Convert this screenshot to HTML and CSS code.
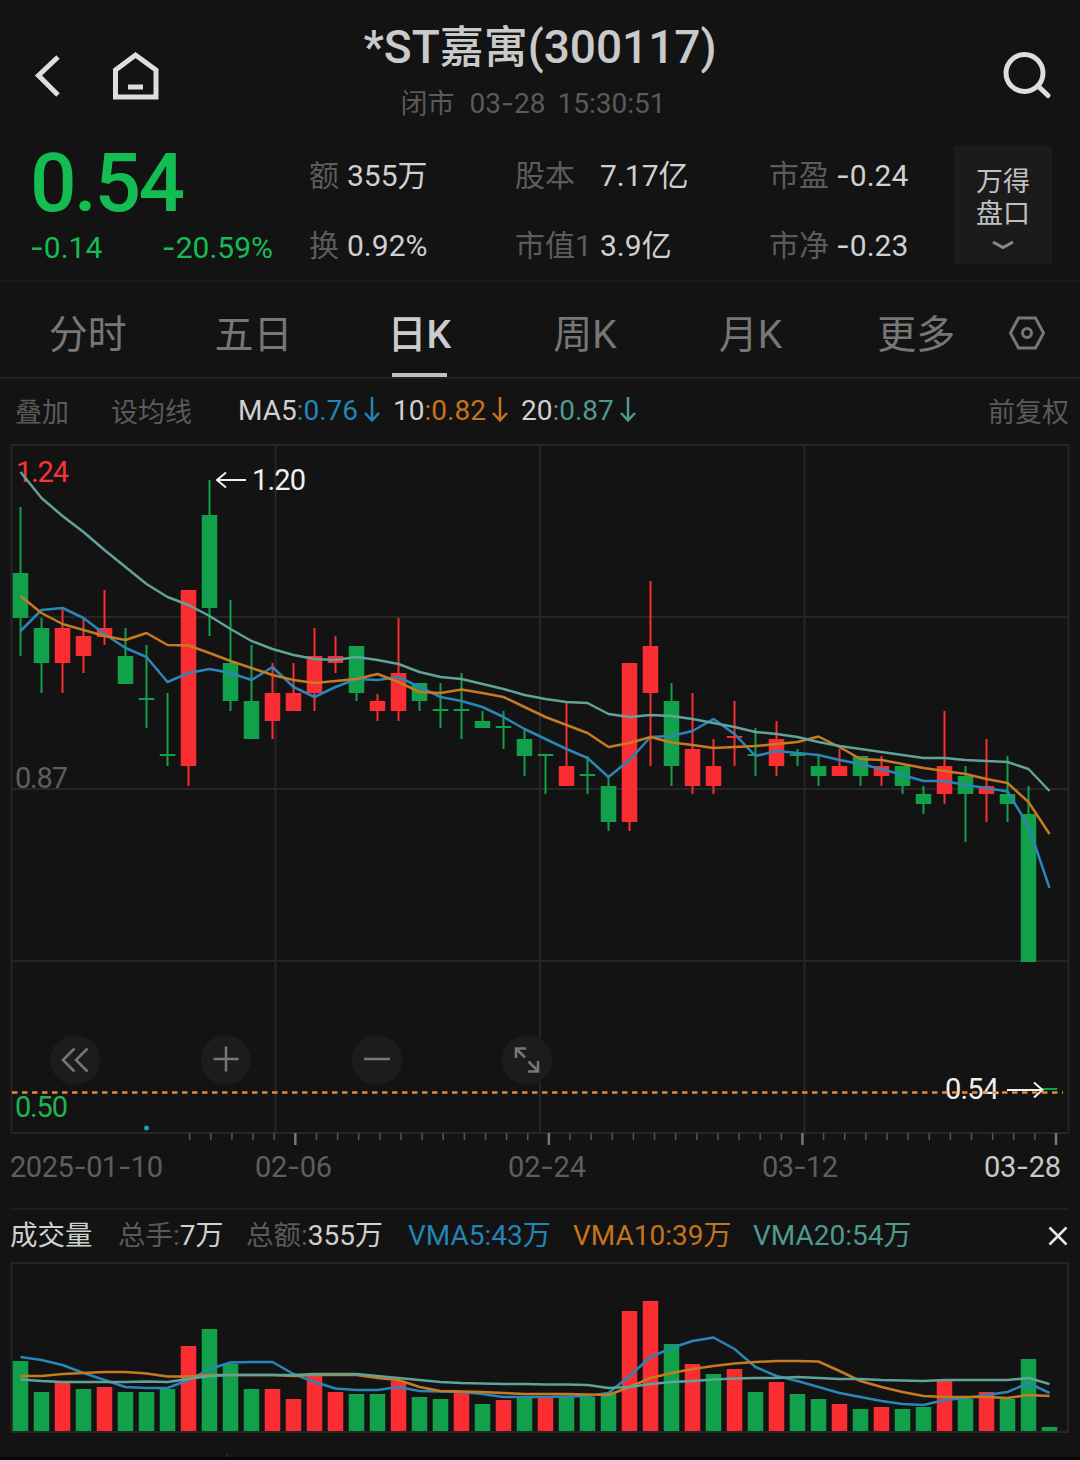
FILE: index.html
```html
<!DOCTYPE html>
<html lang="zh-CN">
<head>
    <meta charset="UTF-8">
    <meta name="viewport" content="width=device-width, initial-scale=1.0">
    <title>*ST嘉寓(300117)</title>
    <link rel="stylesheet" href="styles.css">
</head>
<body>
    <header class="top-bar">
        <div class="top-left">
            <svg class="icon-back" width="30" height="48" viewBox="0 0 30 48"><path d="M27 7L7.500 25.500L27 45"/></svg>
            <svg class="icon-home" width="50" height="52" viewBox="0 0 50 52"><path d="M5.500 20L25.500 5L46 20V47H5.500Z"/><path d="M18 37H33"/></svg>
        </div>
        <div class="top-title">
            <h1>*ST<span class="cn">嘉寓</span>(300117)</h1>
            <p><span class="status">闭市</span><span>03<i>-</i>28</span><span class="time">15:30:51</span></p>
        </div>
        <svg class="icon-search" width="50" height="50" viewBox="0 0 50 50"><circle cx="22.5" cy="23" r="18.5"/><path d="M36 36L46 45.5"/></svg>
    </header>

    <section class="quote">
        <div class="price down">
            <div class="price-now">0.54</div>
            <div class="price-change"><span><i>-</i>0.14</span><span><i>-</i>20.59%</span></div>
        </div>
        <dl class="stats stats-a">
            <div><dt>额</dt><dd>355万</dd></div>
            <div><dt>换</dt><dd>0.92%</dd></div>
        </dl>
        <dl class="stats stats-b">
            <div><dt>股本</dt><dd>7.17亿</dd></div>
            <div><dt>市值1</dt><dd>3.9亿</dd></div>
        </dl>
        <dl class="stats stats-c">
            <div><dt>市盈</dt><dd><i>-</i>0.24</dd></div>
            <div><dt>市净</dt><dd><i>-</i>0.23</dd></div>
        </dl>
        <button class="more-quote">
            万得<br>盘口
            <svg width="22" height="10" viewBox="0 0 22 10"><path d="M1 2L11 7.5L21 2"/></svg>
        </button>
    </section>

    <nav class="tabs">
        <a>分时</a>
        <a>五日</a>
        <a class="active">日K</a>
        <a>周K</a>
        <a>月K</a>
        <a>更多</a>
        <svg class="icon-settings" width="38" height="36" viewBox="0 0 38 36"><path d="M10.5 3H27.5L35.5 18L27.5 33H10.5L2.500 18Z"/><circle cx="19" cy="18" r="4.500"/></svg>
    </nav>

    <div class="ma-bar">
        <span class="tool">叠加</span>
        <span class="tool tool-ma">设均线</span>
        <span class="ma">MA5<b class="blue">:0.76</b><svg class="blue" width="18" height="28" viewBox="0 0 18 28"><path d="M9 1V24M2 17L9 24.500L16 17"/></svg></span>
        <span class="ma">10<b class="orange">:0.82</b><svg class="orange" width="18" height="28" viewBox="0 0 18 28"><path d="M9 1V24M2 17L9 24.500L16 17"/></svg></span>
        <span class="ma">20<b class="teal">:0.87</b><svg class="teal" width="18" height="28" viewBox="0 0 18 28"><path d="M9 1V24M2 17L9 24.500L16 17"/></svg></span>
        <span class="tool adjust">前复权</span>
    </div>

    <svg class="chart" id="kline" width="1080" height="764" viewBox="0 444 1080 764">
        <g class="grid">
            <rect x="11.500" y="445" width="1057" height="688"/>
            <path d="M275.500 445V1133M540 445V1133M804.500 445V1133M11 617H1068M11 789H1068M11 961H1068"/>
        </g>
        <g id="ticks" class="ticks"></g>
        <text x="16" y="482" class="red" textLength="53">1.24</text>
        <text x="15" y="788" class="axis" textLength="53">0.87</text>
        <text x="15" y="1117" class="green" textLength="53">0.50</text>

        <g id="candles"></g>
        <g id="ma-lines" class="lines"></g>
        <circle cx="146.500" cy="1128" r="2.500" fill="#1a9fb5"/>

        <g class="mark">
            <path d="M217 480H246M226 472.500L217 480L226 487.500"/>
            <text x="252" y="490" textLength="54">1.20</text>
            <text x="945" y="1099" textLength="54">0.54</text>
            <path d="M1007 1090H1042M1034 1082.500L1042.500 1090L1034 1097.500"/>
        </g>
        <path class="now-line" d="M12 1092.500H1063"/>

        <g class="round-btn">
            <circle cx="75" cy="1060" r="25"/>
            <path d="M74.500 1048.500L63 1060L74.500 1071.500M87.500 1048.500L76 1060L87.500 1071.500"/>
            <circle cx="226" cy="1060" r="25"/>
            <path d="M213.500 1059H238.500M226 1046.500V1071.500"/>
            <circle cx="377" cy="1060" r="25"/>
            <path d="M364 1059H390"/>
            <circle cx="527" cy="1060" r="25"/>
            <path d="M516 1058V1048.500H526M516 1048.500L525 1057.500M528.500 1061.500L538 1071M538 1061V1071.500H528"/>
        </g>

        <g class="dates">
            <text x="10" y="1177" textLength="153">2025<tspan class="dash">-</tspan>01<tspan class="dash">-</tspan>10</text>
            <text x="255" y="1177" textLength="77">02<tspan class="dash">-</tspan>06</text>
            <text x="508" y="1177" textLength="78">02<tspan class="dash">-</tspan>24</text>
            <text x="762" y="1177" textLength="76">03<tspan class="dash">-</tspan>12</text>
            <text x="984" y="1177" textLength="77" class="today">03<tspan class="dash">-</tspan>28</text>
        </g>
    </svg>

    <div class="vol-bar">
        <span class="vol-name">成交量</span>
        <span class="vol-hands"><em>总手:</em>7万</span>
        <span class="vol-amount"><em>总额:</em>355万</span>
        <span class="vma blue">VMA5:43万</span>
        <span class="vma orange">VMA10:39万</span>
        <span class="vma teal">VMA20:54万</span>
        <svg class="icon-close" width="20" height="20" viewBox="0 0 20 20"><path d="M1.500 1.500L18.500 18.500M18.500 1.500L1.500 18.500"/></svg>
    </div>

    <svg class="chart" id="volume" width="1080" height="198" viewBox="0 1262 1080 198">
        <g class="grid">
            <rect x="11.500" y="1263" width="1056.500" height="169"/>
            <path d="M227 1454V1458"/>
        </g>
        <path d="M0 1458.500H1080" stroke="#050505" stroke-width="3"/>
        <g id="vol-bars"></g>
        <g id="vma-lines" class="lines"></g>
    </svg>

    <script src="script.js"></script>
</body>
</html>
```

FILE: styles.css
```css
* {
    box-sizing: border-box;
}

body {
    margin: 0;
    width: 1080px;
    height: 1460px;
    overflow: hidden;
    background: #131313;
    color: #d0d0d0;
    font-family: Roboto, "Noto Sans CJK SC", sans-serif;
    font-size: 30px;
}

h1, p, dl, dd {
    margin: 0;
}

svg {
    display: block;
    fill: none;
    flex-shrink: 0;
}

/* wide minus sign */
i, .dash {
    font-family: Inter, sans-serif;
    font-style: normal;
    line-height: 1;
}

.blue { color: #2484b8; }
.orange { color: #c4741c; }
.teal { color: #4f9a90; }

/* Header */
.top-bar {
    display: flex;
    justify-content: space-between;
    height: 140px;
    padding: 0 28px 0 31px;
}

.top-left {
    display: flex;
    gap: 49px;
    width: 200px;
    padding-top: 50px;
}

.icon-back, .icon-home, .icon-search {
    stroke: #dedede;
    stroke-width: 5;
}

.icon-search {
    margin-top: 50px;
    stroke-linecap: round;
}

.top-title {
    width: 400px;
    margin-left: 109px;
    margin-right: auto;
    padding-top: 17px;
    text-align: center;
}

.top-title h1 {
    font-size: 46px;
    line-height: 60px;
    font-weight: 500;
    white-space: nowrap;
    color: #cacaca;
}

.top-title .cn {
    font-size: 44px;
}

.top-title p {
    display: flex;
    justify-content: center;
    gap: 15px;
    margin-left: -14px;
    font-size: 28px;
    line-height: 52px;
    color: #5a5a5a;
}

.status {
    font-size: 27px;
}

.time {
    margin-left: -3px;
}

/* Quote */
.quote {
    display: flex;
    height: 142px;
    border-bottom: 2px solid #1b1b1b;
    padding-left: 30px;
}

.price {
    width: 279px;
}

.down {
    color: #13bd52;
}

.price-now {
    font-size: 82px;
    font-weight: 500;
    line-height: 86px;
    letter-spacing: -2.5px;
}

.price-change {
    display: flex;
    justify-content: space-between;
    width: 243px;
    font-size: 30px;
    line-height: 44px;
}

.stats {
    padding-top: 1px;
}

.stats > div {
    display: flex;
    height: 70px;
    line-height: 70px;
}

.stats dt {
    color: #5c5c5c;
}

.stats dd {
    font-size: 30px;
    white-space: nowrap;
}

.stats-a { width: 206px; }
.stats-b { width: 254px; }
.stats-c { width: 185px; }
.stats-a dt { width: 38px; }
.stats-b dt { width: 85px; }
.stats-c dt { width: 67px; }

.more-quote {
    display: flex;
    flex-direction: column;
    align-items: center;
    width: 98px;
    height: 118px;
    margin-top: 6px;
    padding: 18px 0 0;
    border: none;
    background: #1b1b1b;
    color: #c0c0c0;
    font: 27px/32px "Noto Sans CJK SC", sans-serif;
}

.more-quote svg {
    margin: 12px auto 0;
    stroke: #8a8a8a;
    stroke-width: 3;
}

/* Tabs */
.tabs {
    display: flex;
    align-items: center;
    height: 97px;
    padding-left: 5px;
    border-bottom: 2px solid #222;
}

.tabs a {
    position: relative;
    width: 165.7px;
    height: 95px;
    padding-top: 6px;
    line-height: 95px;
    text-align: center;
    font-size: 39px;
    color: #777;
}

.tabs a.active {
    color: #ccc;
    font-weight: 500;
}

.tabs a.active::after {
    content: "";
    position: absolute;
    left: 56px;
    bottom: 0;
    width: 55px;
    height: 4px;
    background: #c0c0c0;
}

.icon-settings {
    margin-top: 6px;
    margin-left: 9px;
    stroke: #777;
    stroke-width: 3;
}

/* Moving averages legend */
.ma-bar {
    display: flex;
    align-items: center;
    height: 65px;
    padding: 0 11px 3px 15px;
    font-size: 28px;
}

.ma-bar b {
    font-weight: 400;
}

.tool {
    font-size: 27px;
    color: #5a5a5a;
}

.tool-ma {
    margin: 0 46px 0 42px;
}

.adjust {
    margin-left: auto;
}

.ma {
    display: flex;
    align-items: center;
    margin-right: 12px;
}

.ma svg {
    margin-left: 5px;
    stroke: currentColor;
    stroke-width: 2.5;
}

/* Charts */
.chart {
    font-size: 29px;
}

.grid {
    stroke: #262626;
    stroke-width: 2;
}

.ticks {
    stroke: #555;
    stroke-width: 1.5;
}

.ticks .major {
    stroke: #777;
    stroke-width: 2.5;
}

.red { fill: #f5333a; }
.green { fill: #22b455; }
.axis { fill: #5e5e5e; }

.up-bar { fill: #fa2d32; stroke: #fa2d32; }
.down-bar { fill: #10a14a; stroke: #10a14a; }

.lines {
    stroke-width: 2.5;
    stroke-linejoin: round;
}

.mark {
    stroke: #f0f0f0;
    stroke-width: 2;
}

.mark text {
    fill: #f0f0f0;
    stroke: none;
}

.now-line {
    stroke: #e08a3c;
    stroke-width: 2.5;
    stroke-dasharray: 5.5 4.5;
}

.round-btn circle {
    fill: #1c1c1c;
}

.round-btn path {
    stroke: #777;
    stroke-width: 2.5;
}

.dates {
    fill: #5e5e5e;
}

.dates .today {
    fill: #c8c8c8;
}

/* Volume legend */
.vol-bar {
    display: flex;
    align-items: center;
    height: 54px;
    margin: 0 12px 0 10px;
    border-top: 2px solid #1d1d1d;
    font-size: 28px;
    line-height: 40px;
    white-space: nowrap;
}

.vol-bar span {
    height: 40px;
}

.vol-bar em {
    font-style: normal;
    font-size: 27.5px;
    color: #5a5a5a;
}

.vol-name {
    width: 108px;
    font-size: 27.5px;
}

.vol-hands { width: 128px; }
.vol-amount { width: 162px; }
.vma { width: 165px; }
.vma.orange { width: 180px; }

.icon-close {
    margin-left: auto;
    stroke: #e8e8e8;
    stroke-width: 2.5;
}
```

FILE: script.js
```js
const NS = 'http://www.w3.org/2000/svg';
const FIRST = 20.5;
const STEP = 21;

// direction, high, body top, body bottom, low
const candles = [
    ['d', 507, 573, 618, 656], ['d', 618, 628, 663, 693], ['u', 608, 628, 663, 693], ['u', 618, 636, 656, 673],
    ['u', 590, 628, 637, 645], ['d', 628, 656, 684, 684], ['d', 645, 698, 700, 728], ['d', 693, 754, 756, 766],
    ['u', 590, 590, 766, 786], ['d', 480, 515, 608, 636], ['d', 600, 663, 701, 711], ['d', 645, 701, 739, 739],
    ['u', 663, 693, 721, 739], ['u', 663, 693, 711, 711], ['u', 628, 656, 693, 711], ['u', 636, 656, 663, 673],
    ['d', 646, 646, 693, 701], ['u', 694, 701, 711, 721], ['u', 618, 673, 711, 721], ['d', 683, 683, 701, 711],
    ['d', 683, 709, 711, 728], ['d', 673, 709, 711, 739], ['d', 711, 721, 728, 728], ['d', 711, 726, 728, 749],
    ['d', 728, 739, 756, 776], ['d', 755, 754, 756, 794], ['u', 703, 766, 786, 786], ['d', 756, 774, 776, 794],
    ['d', 775, 786, 822, 831], ['u', 663, 663, 822, 831], ['u', 581, 646, 693, 766], ['d', 683, 701, 766, 786],
    ['u', 693, 749, 786, 794], ['u', 739, 766, 786, 794], ['u', 701, 736, 738, 766], ['d', 728, 754, 756, 776],
    ['u', 721, 739, 766, 776], ['d', 749, 754, 756, 766], ['d', 756, 766, 776, 786], ['u', 749, 766, 776, 776],
    ['d', 756, 756, 776, 786], ['u', 756, 766, 776, 786], ['d', 766, 766, 786, 794], ['d', 786, 794, 804, 814],
    ['u', 711, 766, 794, 804], ['d', 766, 776, 794, 842], ['u', 739, 786, 794, 822], ['d', 756, 794, 804, 822],
    ['d', 786, 814, 962, 962], ['d', 1088, 1088, 1090, 1090]
];

const ma20 = [472, 498, 516, 532, 550, 567, 584, 597, 605, 616, 629, 641, 649, 655, 659, 660, 657, 660, 664, 672, 677, 679, 684, 689, 695, 699, 702, 703, 714, 717, 715, 716, 719, 723, 727, 732, 734, 737, 742, 746, 749, 752, 755, 758, 758, 760, 761, 762, 769, 791];
const ma10 = [596, 613, 624, 630, 636, 640, 633, 645, 645.5, 653, 661, 668, 675, 680, 683, 681, 679, 674, 682, 692, 693, 689.5, 693, 697, 707, 717, 725, 733, 747, 743, 737, 742.5, 745, 748, 747, 746, 744, 742, 736.5, 747, 759, 760, 764, 768, 771, 774, 779, 783, 802, 834];
const ma5 = [631, 610, 608, 618, 634, 648, 657, 682, 673, 669, 673, 680, 667, 687, 697, 687, 679, 680, 677, 687, 697, 701, 707, 717, 729, 739, 749, 758, 777, 760, 737, 736, 731, 719, 734, 756, 751, 753, 755, 760, 764, 769, 775, 781, 781, 785, 788, 791.5, 826, 888];

const volColors = 'ddududddud' + 'dduuuuddud' + 'dudududddu' + 'ududududdu' + 'duddududdd';
const volTops = [1361, 1392, 1382, 1389, 1387, 1392, 1392, 1389, 1346, 1329, 1364, 1389, 1389, 1399, 1376, 1392, 1394, 1394, 1381, 1397, 1399, 1392, 1404, 1400, 1396, 1397, 1397, 1397, 1394, 1311, 1301, 1344, 1364, 1374, 1369, 1392, 1382, 1394, 1399, 1404, 1409, 1407, 1409, 1407, 1380, 1399, 1392, 1399, 1359, 1427];

const vma5 = [1357, 1360, 1365, 1373, 1380, 1387, 1388, 1388, 1380, 1369, 1362.5, 1362, 1362, 1374, 1382, 1388.5, 1390, 1390, 1387, 1391, 1391.5, 1392, 1394, 1397, 1397, 1397, 1396.5, 1396, 1393, 1376, 1357, 1348, 1341, 1337.5, 1349, 1367, 1376, 1381, 1387, 1393, 1397, 1401, 1404, 1405, 1400, 1398, 1395, 1392, 1383, 1393];
const vma10 = [1376, 1376, 1374, 1373, 1372, 1372, 1373.5, 1376.5, 1376.5, 1375, 1375, 1375, 1375, 1376, 1375, 1375, 1375, 1378, 1380, 1387, 1391, 1391.5, 1392, 1393, 1394, 1394, 1394, 1394.5, 1395, 1387, 1378, 1373, 1369, 1366, 1363.5, 1362, 1361, 1361, 1361.5, 1371, 1381, 1387, 1392, 1396, 1397, 1397, 1397, 1398, 1395, 1396];
const vma20 = [1379.5, 1381, 1382, 1382, 1382, 1382, 1381.5, 1382, 1379, 1376, 1375, 1375, 1375, 1375, 1374, 1374, 1374, 1376, 1378, 1380, 1382, 1383, 1383.5, 1384, 1384, 1384.5, 1384.5, 1385, 1388, 1387, 1384, 1382, 1381, 1379.5, 1378.5, 1378, 1378, 1377, 1378, 1379, 1379, 1380, 1380.5, 1381, 1380, 1380, 1380, 1380, 1378, 1384];

function add(parent, tag, attrs) {
    const el = document.createElementNS(NS, tag);
    for (const key in attrs) {
        el.setAttribute(key, attrs[key]);
    }
    document.getElementById(parent).appendChild(el);
}

function drawLine(parent, values, color) {
    const points = values.map((y, i) => `${FIRST + i * STEP},${y}`).join(' ');
    add(parent, 'polyline', { points: points, stroke: color });
}

candles.forEach(([dir, high, top, bottom, low], i) => {
    const x = FIRST + i * STEP;
    const cls = dir === 'u' ? 'up-bar' : 'down-bar';
    add('candles', 'path', { d: `M${x} ${high}V${low}`, class: cls, 'stroke-width': 2 });
    add('candles', 'rect', { x: x - 7.75, y: top, width: 15.5, height: bottom - top, class: cls, 'stroke-width': 0 });
});

volTops.forEach((top, i) => {
    const x = FIRST + i * STEP;
    const cls = volColors[i] === 'u' ? 'up-bar' : 'down-bar';
    add('vol-bars', 'rect', { x: x - 7.75, y: top, width: 15.5, height: 1431 - top, class: cls, 'stroke-width': 0 });
});

// one tick per trading day, a long one every 12
for (let k = 0; k <= 41; k++) {
    const major = k % 12 === 0;
    const x = 1056 - k * 21.13;
    add('ticks', 'path', { d: `M${x} 1133V${major ? 1145 : 1140}`, class: major ? 'major' : 'minor' });
}

drawLine('ma-lines', ma5, '#2a86b8');
drawLine('ma-lines', ma10, '#c67a22');
drawLine('ma-lines', ma20, '#5fa39b');
drawLine('vma-lines', vma5, '#2a86b8');
drawLine('vma-lines', vma10, '#c67a22');
drawLine('vma-lines', vma20, '#5fa39b');
```
